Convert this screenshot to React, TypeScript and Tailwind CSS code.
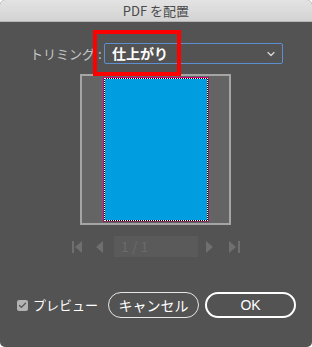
import { ChevronDown, Check } from "lucide-react";

const jp = { fontFamily: '"Noto Sans CJK JP", "Noto Sans", sans-serif' };

function NavIcons() {
  return (
    <div className="flex items-center h-[21px] mt-[11px] pl-[72px] text-[#6f6f6f]">
      <svg width="10" height="12" viewBox="0 0 10 12" className="fill-current">
        <rect x="0" y="0" width="2" height="12" />
        <polygon points="10,0 3,6 10,12" />
      </svg>
      <svg width="7" height="12" viewBox="0 0 7 12" className="fill-current ml-[14px]">
        <polygon points="7,0 0,6 7,12" />
      </svg>
      <div className="ml-[11px] w-[84px] h-[21px] bg-[#5a5a5a] flex items-center pl-[7px] text-[14px] text-[#6a6a6a]">
        1 / 1
      </div>
      <svg width="7" height="12" viewBox="0 0 7 12" className="fill-current ml-[8px]">
        <polygon points="0,0 7,6 0,12" />
      </svg>
      <svg width="11" height="12" viewBox="0 0 11 12" className="fill-current ml-[16px]">
        <polygon points="0,0 7,6 0,12" />
        <rect x="9" y="0" width="2" height="12" />
      </svg>
    </div>
  );
}

export default function App() {
  return (
    <div className="w-[312px] h-[347px] bg-white" style={jp}>
      <div className="relative w-full h-full rounded-[5px] overflow-hidden bg-[#535353] flex flex-col">
        <div className="h-[22px] bg-gradient-to-b from-[#e3e3e3] to-[#d3d3d3] border-b border-[#b5b5b5] flex items-center justify-center text-[13px] text-[#4a4a4a]">
          PDF を配置
        </div>

        <div className="flex items-center mt-[21px] pl-[30px] h-[21px]">
          <span className="w-[68px] text-[13px] text-[#c4c4c4] whitespace-nowrap">トリミング :</span>
          <div className="ml-[6px] w-[179px] h-[21px] border border-[#5b8fcf] rounded-[2px] flex items-center justify-between pl-[7px] pr-[5px]">
            <span className="text-[14px] font-semibold text-white">仕上がり</span>
            <ChevronDown className="size-[12px] text-[#d8d8d8]" strokeWidth={2.5} />
          </div>
        </div>

        <div className="mt-[10px] ml-[80px] w-[151px] h-[151px] border-2 border-[#a5a5a5] bg-[#646464] flex justify-center py-[1px]">
          <div className="w-[106px] border border-[#d4007a] border-r-[#7a2a55] border-b-[#7a2a55]">
            <div className="w-full h-full border border-dotted border-white bg-black">
              <div className="w-full h-full bg-[#009de0]" />
            </div>
          </div>
        </div>

        <NavIcons />

        <div className="flex items-center mt-[35px] h-[26px]">
          <div className="ml-[17px] size-[11px] rounded-[2px] bg-[#b3b3b3] flex items-center justify-center">
            <Check className="size-[9px] text-[#555]" strokeWidth={3.5} />
          </div>
          <span className="ml-[5px] w-[65px] text-[13px] text-white whitespace-nowrap">プレビュー</span>
          <button className="ml-[10px] w-[91px] h-[26px] rounded-full border border-[#e6e6e6] text-[14px] text-white">
            キャンセル
          </button>
          <button className="ml-[6px] w-[91px] h-[26px] rounded-full border-2 border-white text-[14px] text-white" style={{ fontFamily: '"Liberation Sans", sans-serif' }}>
            OK
          </button>
        </div>

        <div className="absolute left-[93px] top-[30px] w-[88px] h-[46px] border-[4px] border-[#ff0000]" />
      </div>
    </div>
  );
}
